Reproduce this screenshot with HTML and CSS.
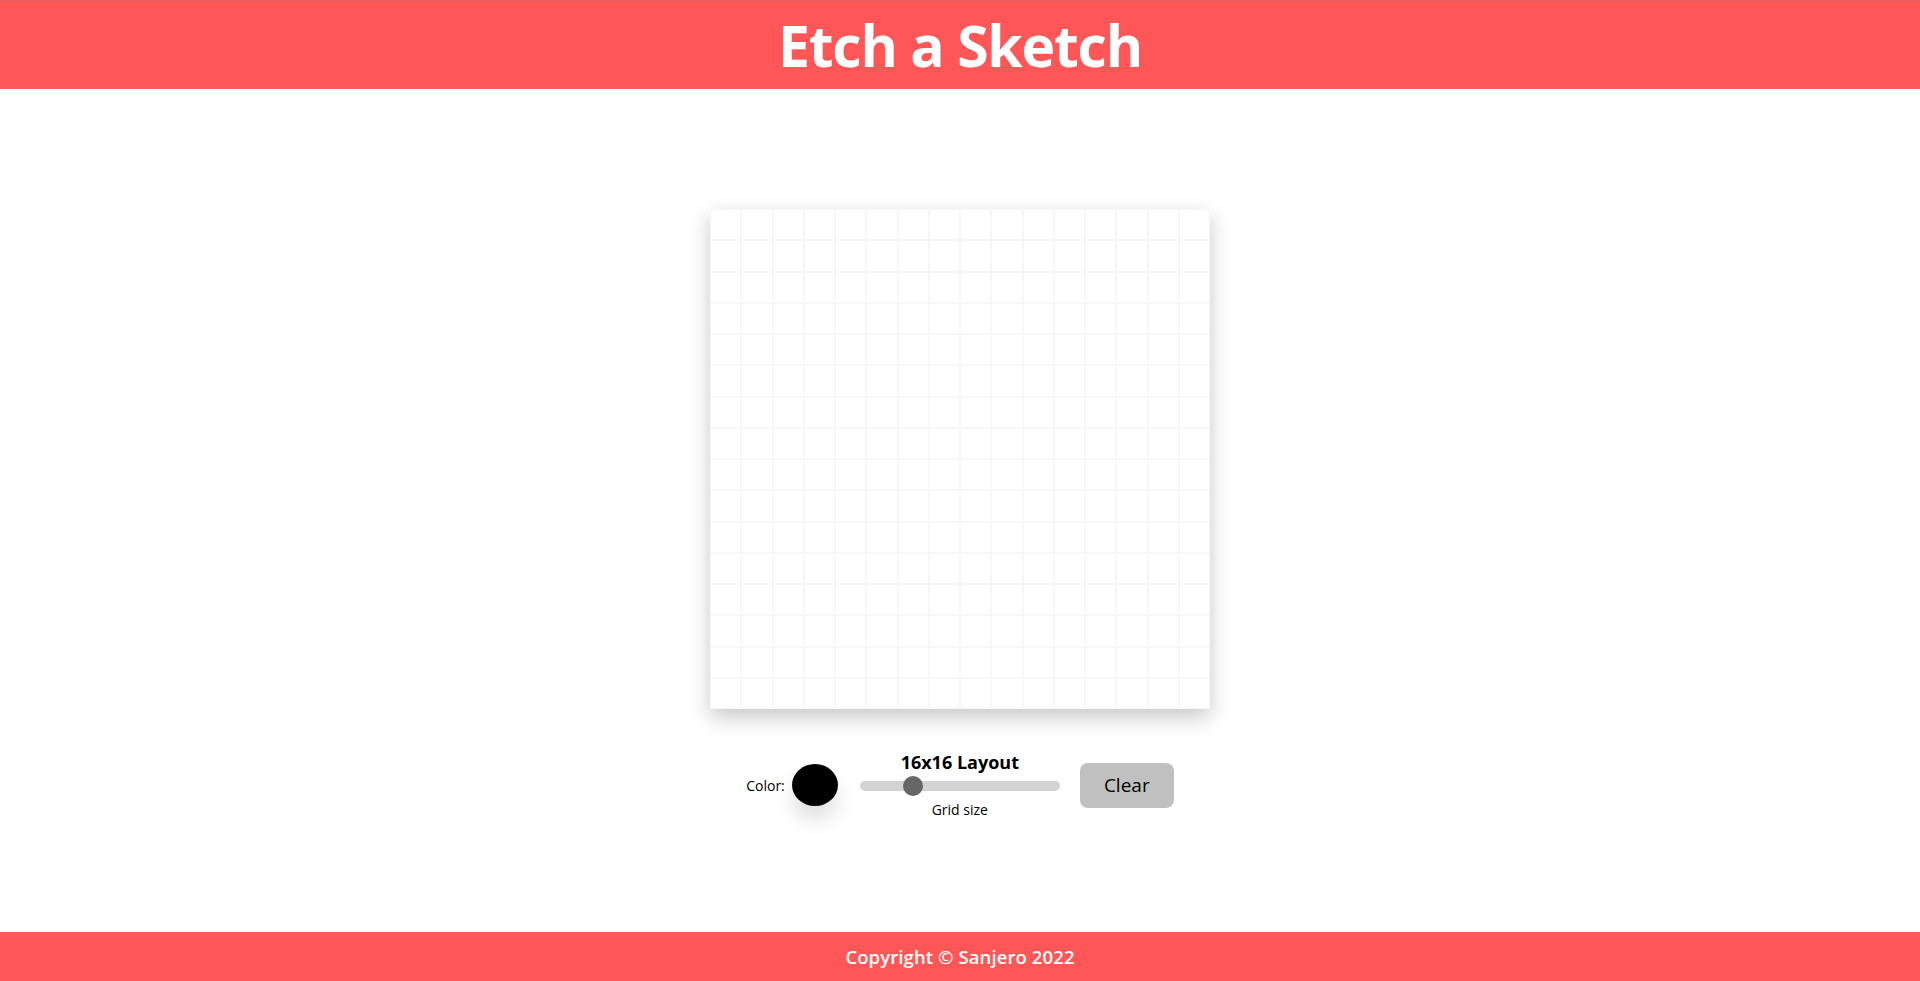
FILE: index.html
```html
<!DOCTYPE html>
<html lang="en">
<head>
<meta charset="utf-8">
<title>Etch a Sketch</title>
<link rel="stylesheet" href="styles.css">
</head>
<body>
<header class="header">
  <h1 class="title">Etch a Sketch</h1>
</header>
<main class="main">
  <div class="board" id="board"></div>
  <div class="controls">
    <label class="color-label">Color:</label>
    <div class="color-swatch"></div>
    <div class="size-group">
      <div class="size-title">16x16 Layout</div>
      <input class="slider" type="range" min="1" max="64" value="16">
      <div class="size-label">Grid size</div>
    </div>
    <button class="clear-btn">Clear</button>
  </div>
</main>
<footer class="footer">
  <p class="copy">Copyright © Sanjero 2022</p>
</footer>
<script src="script.js"></script>
</body>
</html>
```
FILE: script.js
```js
var board = document.getElementById('board');
for (var i = 0; i < 256; i++) {
  var c = document.createElement('div');
  c.className = 'cell';
  board.appendChild(c);
}
```
FILE: styles.css
```css
* { box-sizing: border-box; }
html, body { margin: 0; padding: 0; }
body {
  font-family: "Open Sans", "Noto Sans", sans-serif;
  height: 100vh;
  display: flex;
  flex-direction: column;
  background: #fff;
  color: #000;
}
.header {
  height: 89px;
  background: #ff5757;
  border-top: 1px solid #e86262;
  display: flex;
  align-items: center;
  justify-content: center;
}
.title {
  margin: 0;
  color: #fff;
  font-size: 57px;
  font-weight: 700;
  letter-spacing: -1.2px;
  line-height: 1;
}
.main {
  flex: 1;
  display: flex;
  flex-direction: column;
  align-items: center;
  padding-top: 120px;
}
.board {
  width: 500px;
  height: 500px;
  display: grid;
  grid-template-columns: repeat(16, 1fr);
  grid-template-rows: repeat(16, 1fr);
  box-shadow: 0 8px 20px rgba(0, 0, 0, 0.22);
  background: #fff;
}
.cell {
  border: 1px solid #f7f7f7;
}
.controls {
  margin-top: 42px;
  display: flex;
  align-items: center;
}
.color-label {
  font-size: 14px;
  margin-right: 7px;
}
.color-swatch {
  width: 46px;
  height: 42px;
  border-radius: 50%;
  background: #000;
  box-shadow: 0 14px 20px rgba(0, 0, 0, 0.12);
  margin-right: 22px;
}
.size-group {
  display: flex;
  flex-direction: column;
  align-items: center;
  width: 200px;
}
.size-title {
  font-size: 18px;
  font-weight: 700;
  line-height: 22px;
}
.slider {
  -webkit-appearance: none;
  appearance: none;
  width: 200px;
  height: 10px;
  border-radius: 5px;
  background: #d3d3d3;
  margin: 8px 0 10px;
  outline: none;
}
.slider::-webkit-slider-thumb {
  -webkit-appearance: none;
  appearance: none;
  width: 20px;
  height: 20px;
  border-radius: 50%;
  background: #666;
  cursor: pointer;
}
.size-label {
  font-size: 14px;
  line-height: 18px;
}
.clear-btn {
  margin-left: 20px;
  width: 94px;
  height: 45px;
  border: none;
  border-radius: 8px;
  background: #c0c0c0;
  font-family: inherit;
  font-size: 19px;
  color: #000;
}
.footer {
  height: 49px;
  background: #ff5757;
  display: flex;
  align-items: center;
  justify-content: center;
}
.copy {
  margin: 0;
  color: #fff;
  font-size: 18.5px;
  font-weight: 600;
  letter-spacing: 0.1px;
}
```
